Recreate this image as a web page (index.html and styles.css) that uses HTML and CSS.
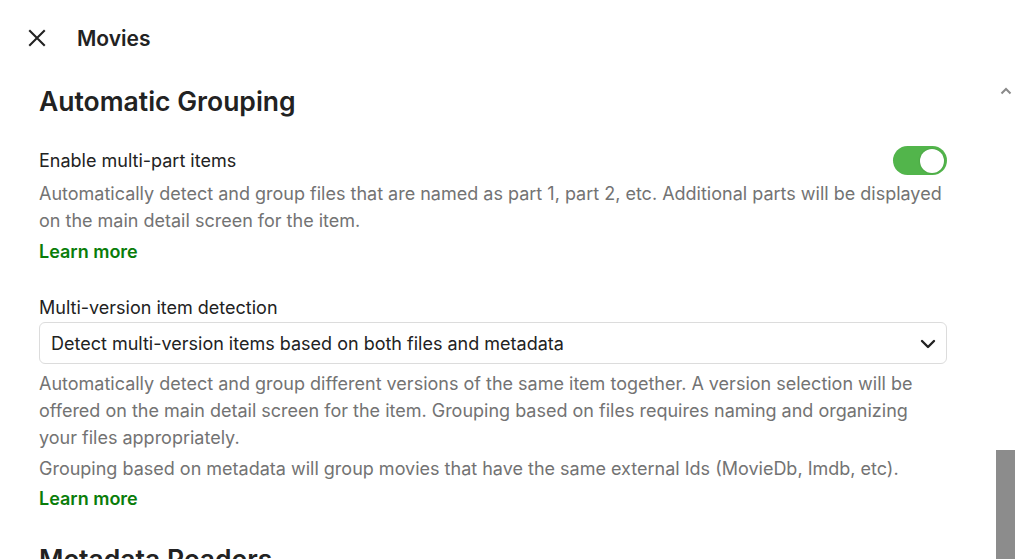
FILE: index.html
```html
<!DOCTYPE html>
<html lang="en">
<head>
<meta charset="utf-8">
<title>Movies</title>
<link rel="stylesheet" href="styles.css">
</head>
<body>
<div class="page">
  <header class="topbar">
    <button class="close" aria-label="Close">
      <svg width="18" height="18" viewBox="0 0 18 18"><path d="M2 2 L16 16 M16 2 L2 16" stroke="#222" stroke-width="2.1" stroke-linecap="square" fill="none"/></svg>
    </button>
    <h1 class="title">Movies</h1>
  </header>
  <div class="body">
    <main class="content">
      <h2 class="section-title">Automatic Grouping</h2>

      <div class="setting-row">
        <span class="label">Enable multi-part items</span>
        <span class="toggle"><span class="knob"></span></span>
      </div>
      <p class="desc first">Automatically detect and group files that are named as part 1, part 2, etc. Additional parts will be displayed on the main detail screen for the item.</p>
      <a class="learn" href="#">Learn more</a>

      <div class="label-row"><span class="label">Multi-version item detection</span></div>
      <div class="select">
        <span>Detect multi-version items based on both files and metadata</span>
        <svg width="16" height="10" viewBox="0 0 16 10"><path d="M2 2 L8 8 L14 2" stroke="#222" stroke-width="2.4" fill="none" stroke-linecap="round" stroke-linejoin="round"/></svg>
      </div>
      <p class="desc first">Automatically detect and group different versions of the same item together. A version selection will be offered on the main detail screen for the item. Grouping based on files requires naming and organizing your files appropriately.</p>
      <p class="desc second">Grouping based on metadata will group movies that have the same external Ids (MovieDb, Imdb, etc).</p>
      <a class="learn last" href="#">Learn more</a>

      <h2 class="section-title next">Metadata Readers</h2>
    </main>
    <div class="scrollbar">
      <svg class="arrow" width="12" height="8" viewBox="0 0 12 8"><path d="M1.5 6.5 L6 2 L10.5 6.5" stroke="#8a8a8a" stroke-width="2" fill="none"/></svg>
      <div class="thumb"></div>
    </div>
  </div>
</div>
</body>
</html>
```
FILE: styles.css
```css
* { box-sizing: border-box; }
html, body { margin: 0; padding: 0; background: #fff; }
body {
  font-family: Inter, "Noto Sans", sans-serif;
  color: #222;
  width: 1015px;
  height: 559px;
  overflow: hidden;
}
.page { display: flex; flex-direction: column; height: 559px; }
.topbar {
  height: 78px;
  flex: none;
  display: flex;
  align-items: flex-start;
  padding: 29px 0 0 28px;
}
.close {
  width: 18px; height: 18px;
  padding: 0; border: 0; background: none;
  display: block;
}
.close svg { display: block; }
.title {
  margin: -3px 0 0 31px;
  font-size: 21px;
  font-weight: 600;
  line-height: 25px;
  color: #222;
}
.body { flex: 1; display: flex; min-height: 0; }
.content {
  flex: 1;
  padding: 6px 49px 0 39px;
  overflow: hidden;
}
.section-title {
  margin: 0;
  font-size: 26.5px;
  font-weight: 600;
  line-height: 34px;
  color: #222;
}
.section-title.next { margin-top: 30px; }
.setting-row {
  margin-top: 28px;
  height: 29px;
  display: flex;
  align-items: center;
  justify-content: space-between;
}
.label {
  font-size: 18px;
  line-height: 27px;
  color: #222;
}
.toggle {
  width: 54px; height: 29px;
  border-radius: 15px;
  background: #52b54b;
  display: flex;
  align-items: center;
  justify-content: flex-end;
  padding-right: 3px;
}
.knob {
  width: 24px; height: 24px;
  border-radius: 50%;
  background: #fff;
  box-shadow: 0 0 2px rgba(0,0,0,0.2);
}
.desc {
  margin: 0;
  font-size: 18px;
  line-height: 27px;
  color: #737373;
}
.setting-row + .desc.first { margin-top: 5px; }
.desc.second { margin-top: 4px; }
.learn {
  display: block;
  margin-top: 4px;
  font-size: 18px;
  line-height: 27px;
  font-weight: 600;
  color: #0a7d0a;
  text-decoration: none;
}
.learn.last { margin-top: 3px; }
.label-row { margin-top: 29px; height: 27px; }
.select {
  margin-top: 1px;
  height: 42px;
  border: 1px solid #dcdcdc;
  border-radius: 6px;
  display: flex;
  align-items: center;
  justify-content: space-between;
  padding: 1px 10px 0 11px;
  font-size: 18px;
  color: #222;
}
.select + .desc.first { margin-top: 6px; }
.scrollbar {
  width: 19px;
  flex: none;
  display: flex;
  flex-direction: column;
  align-items: center;
}
.arrow { margin-top: 9px; display: block; }
.thumb {
  margin-top: auto;
  width: 19px;
  height: 109px;
  background: #8c8c8c;
}
```
